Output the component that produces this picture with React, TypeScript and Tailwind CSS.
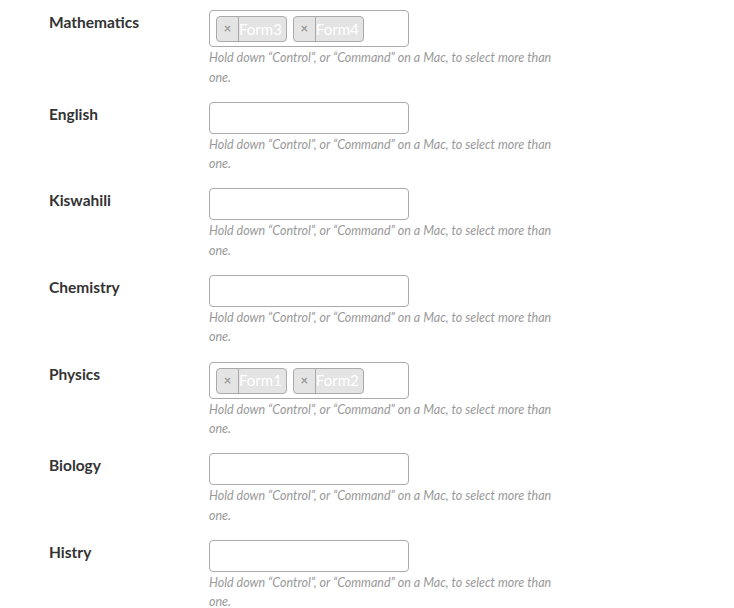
import React from 'react';

interface Field {
  label: string;
  values: string[];
}

const fields: Field[] = [
  { label: 'Mathematics', values: ['Form3', 'Form4'] },
  { label: 'English', values: [] },
  { label: 'Kiswahili', values: [] },
  { label: 'Chemistry', values: [] },
  { label: 'Physics', values: ['Form1', 'Form2'] },
  { label: 'Biology', values: [] },
  { label: 'Histry', values: [] },
];

const font = { fontFamily: 'Lato, "Open Sans", sans-serif' };

const Chip: React.FC<{ text: string }> = ({ text }) => (
  <span className="mr-[6px] mt-[5px] flex h-[26px] items-center rounded-[4px] border border-[#aaaaaa] bg-[#e4e4e4]">
    <span className="flex h-full w-[22px] items-center justify-center border-r border-[#aaaaaa] text-[13px] font-bold text-[#999999]">
      ×
    </span>
    <span className="pr-[4px] text-[15px] leading-none text-white">{text}</span>
  </span>
);

const SelectRow: React.FC<{ field: Field }> = ({ field }) => (
  <div className="flex pb-[14.67px]">
    <label className="w-[160px] shrink-0 pt-[2px] text-[15.5px] font-bold leading-[20px] text-[#333333]">
      {field.label}
    </label>
    <div>
      {field.values.length > 0 ? (
        <div className="flex w-[200px] flex-wrap rounded-[4px] border border-[#aaaaaa] bg-white pb-[4px] pl-[6px]">
          {field.values.map(v => (
            <Chip key={v} text={v} />
          ))}
        </div>
      ) : (
        <div className="h-[32px] w-[200px] rounded-[4px] border border-[#aaaaaa] bg-white" />
      )}
      <p className="mt-[1px] text-[12.5px] italic leading-[19.5px] text-[#999999]">
        Hold down “Control”, or “Command” on a Mac, to select more than
        <br />
        one.
      </p>
    </div>
  </div>
);

export default function App() {
  return (
    <div className="min-h-[608px] bg-white pl-[49px] pt-[10px]" style={font}>
      {fields.map(f => (
        <SelectRow key={f.label} field={f} />
      ))}
    </div>
  );
}
